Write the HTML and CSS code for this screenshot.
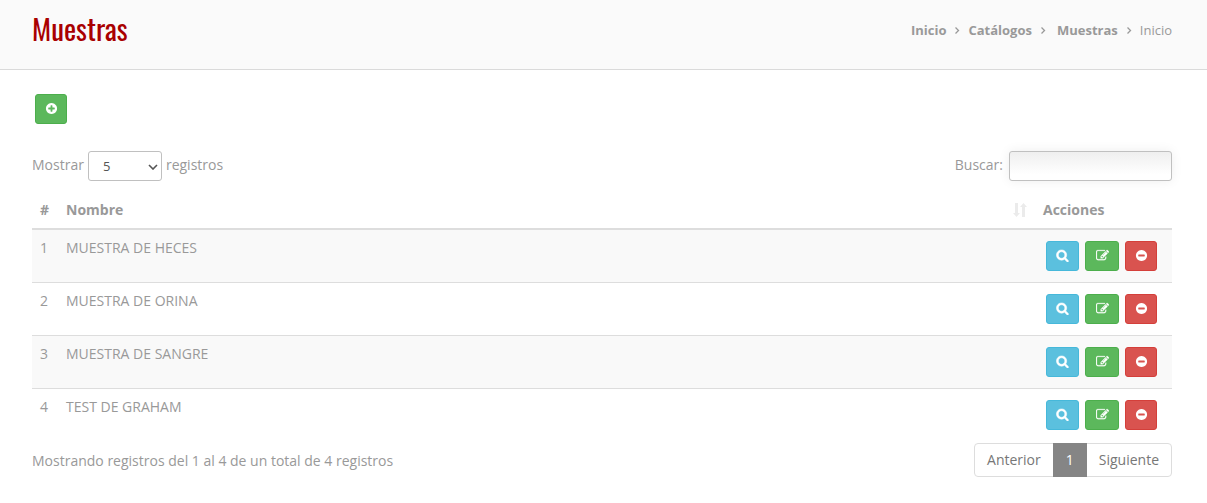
FILE: index.html
```
<!DOCTYPE html>
<html lang="es">
<head>
  <meta charset="UTF-8" />
  <meta name="viewport" content="width=device-width, initial-scale=1.0" />
  <title>Muestras</title>
  <link rel="stylesheet" href="styles.css">
</head>
<body>
  <!-- Iconos reutilizables -->
  <svg class="iconos" aria-hidden="true">
    <symbol id="i-mas" viewBox="0 0 1792 1792"><path d="M1344 960v-128q0-26-19-45t-45-19h-256v-256q0-26-19-45t-45-19h-128q-26 0-45 19t-19 45v256h-256q-26 0-45 19t-19 45v128q0 26 19 45t45 19h256v256q0 26 19 45t45 19h128q26 0 45-19t19-45v-256h256q26 0 45-19t19-45zm320-64q0 209-103 385.5t-279.5 279.5-385.5 103-385.5-103-279.5-279.5-103-385.5 103-385.5 279.5-279.5 385.5-103 385.5 103 279.5 279.5 103 385.5z"/></symbol>
    <symbol id="i-menos" viewBox="0 0 1792 1792"><path d="M1344 960v-128q0-26-19-45t-45-19h-768q-26 0-45 19t-19 45v128q0 26 19 45t45 19h768q26 0 45-19t19-45zm320-64q0 209-103 385.5t-279.5 279.5-385.5 103-385.5-103-279.5-279.5-103-385.5 103-385.5 279.5-279.5 385.5-103 385.5 103 279.5 279.5 103 385.5z"/></symbol>
    <symbol id="i-ver" viewBox="0 0 1792 1792"><path stroke="currentColor" stroke-width="70" d="M1216 832q0-185-131.5-316.5t-316.5-131.5-316.5 131.500-131.5 316.500 131.5 316.500 316.500 131.500 316.500-131.5 131.500-316.5zm512 832q0 52-38 90t-90 38q-54 0-90-38l-343-342q-179 124-399 124-143 0-273.5-55.5t-225-150-150-225-55.5-273.5 55.5-273.5 150-225 225-150 273.5-55.5 273.5 55.5 225 150 150 225 55.5 273.5q0 220-124 399l343 343q37 37 37 90z"/></symbol>
    <symbol id="i-editar" viewBox="0 0 1792 1792"><path stroke="currentColor" stroke-width="30" d="M888 1184l116-116-152-152-116 116v56h96v96h56zm440-720q-16-16-33 1l-350 350q-17 17-1 33t33-1l350-350q17-17 1-33zm80 594v190q0 119-84.5 203.5t-203.5 84.5h-832q-119 0-203.5-84.5t-84.5-203.5v-832q0-119 84.5-203.5t203.5-84.5h832q63 0 117 25 15 7 18 23 3 17-9 29l-49 49q-14 14-32 8-23-6-45-6h-832q-66 0-113 47t-47 113v832q0 66 47 113t113 47h832q66 0 113-47t47-113v-126q0-13 9-22l64-64q15-15 35-7t20 29zm-96-738l288 288-672 672h-288v-288zm444 132l-92 92-288-288 92-92q28-28 68-28t68 28l152 152q28 28 28 68t-28 68z"/></symbol>
    <symbol id="i-flecha" viewBox="0 0 6 10"><path d="M1.5 2.5l3 3-3 3" fill="none" stroke="currentColor" stroke-width="1.3"/></symbol>
    <symbol id="i-orden" viewBox="0 0 14 14"><path d="M2 0h3v10h2l-3.500 4-3.500-4h2zM9 14h3V4h2l-3.500-4L7 4h2z"/></symbol>
  </svg>

  <header class="cabecera">
    <h1>Muestras</h1>
    <nav class="migas" aria-label="Ruta">
      <a href="#">Inicio</a>
      <svg><use href="#i-flecha"/></svg>
      <a href="#">Catálogos</a>
      <svg><use href="#i-flecha"/></svg>
      <a href="#" class="seccion">Muestras</a>
      <svg><use href="#i-flecha"/></svg>
      <span>Inicio</span>
    </nav>
  </header>

  <main class="contenido">
    <div class="barra">
      <button class="boton verde" aria-label="Agregar"><svg><use href="#i-mas"/></svg></button>
    </div>

    <div class="filtros">
      <label>Mostrar
        <span class="selector">
          <select>
            <option>5</option>
            <option>10</option>
            <option>25</option>
          </select>
          <svg viewBox="0 0 10 6"><path d="M1 1l4 4 4-4" fill="none" stroke="currentColor" stroke-width="1.6"/></svg>
        </span>
        registros</label>
      <label class="buscar">Buscar: <input type="search"></label>
    </div>

    <table class="tabla">
      <thead>
        <tr>
          <th class="numero">#</th>
          <th><div class="ordenable">Nombre <svg><use href="#i-orden"/></svg></div></th>
          <th class="acciones">Acciones</th>
        </tr>
      </thead>
      <tbody>
        <tr>
          <td>1</td>
          <td>MUESTRA DE HECES</td>
          <td>
            <div class="botones">
              <button class="boton celeste" aria-label="Ver"><svg><use href="#i-ver"/></svg></button>
              <button class="boton verde editar" aria-label="Editar"><svg><use href="#i-editar"/></svg></button>
              <button class="boton rojo" aria-label="Eliminar"><svg><use href="#i-menos"/></svg></button>
            </div>
          </td>
        </tr>
        <tr>
          <td>2</td>
          <td>MUESTRA DE ORINA</td>
          <td>
            <div class="botones">
              <button class="boton celeste" aria-label="Ver"><svg><use href="#i-ver"/></svg></button>
              <button class="boton verde editar" aria-label="Editar"><svg><use href="#i-editar"/></svg></button>
              <button class="boton rojo" aria-label="Eliminar"><svg><use href="#i-menos"/></svg></button>
            </div>
          </td>
        </tr>
        <tr>
          <td>3</td>
          <td>MUESTRA DE SANGRE</td>
          <td>
            <div class="botones">
              <button class="boton celeste" aria-label="Ver"><svg><use href="#i-ver"/></svg></button>
              <button class="boton verde editar" aria-label="Editar"><svg><use href="#i-editar"/></svg></button>
              <button class="boton rojo" aria-label="Eliminar"><svg><use href="#i-menos"/></svg></button>
            </div>
          </td>
        </tr>
        <tr>
          <td>4</td>
          <td>TEST DE GRAHAM</td>
          <td>
            <div class="botones">
              <button class="boton celeste" aria-label="Ver"><svg><use href="#i-ver"/></svg></button>
              <button class="boton verde editar" aria-label="Editar"><svg><use href="#i-editar"/></svg></button>
              <button class="boton rojo" aria-label="Eliminar"><svg><use href="#i-menos"/></svg></button>
            </div>
          </td>
        </tr>
      </tbody>
    </table>

    <div class="pie">
      <p>Mostrando registros del 1 al 4 de un total de 4 registros</p>
      <nav class="paginas" aria-label="Paginación">
        <a href="#">Anterior</a>
        <a href="#" class="activa">1</a>
        <a href="#">Siguiente</a>
      </nav>
    </div>
  </main>
</body>
</html>
```
FILE: styles.css
```
* {
  box-sizing: border-box;
}
body {
  font-family: 'Open Sans', sans-serif;
  font-size: 14px;
  line-height: 20px;
  margin: 0;
  background-color: #fff;
  color: #999;
}
svg {
  fill: currentColor;
}
.iconos {
  display: none;
}
.cabecera {
  display: flex;
  justify-content: space-between;
  align-items: flex-start;
  padding: 8px 35px 21px 32px;
  background-color: #fafafa;
  border-bottom: 1px solid #dadada;
}
.cabecera h1 {
  font-family: 'Oswald', 'Open Sans Condensed', 'Roboto Condensed', 'Liberation Sans Narrow', sans-serif;
  font-size: 29px;
  font-weight: 400;
  line-height: 40px;
  margin: 0;
  color: #a90000;
}
.migas {
  display: flex;
  align-items: center;
  gap: 8px;
  padding-top: 12px;
  font-size: 13px;
}
.migas a {
  color: #999;
  font-weight: bold;
  text-decoration: none;
}
.migas .seccion {
  margin-left: 3px;
}
.migas svg {
  width: 6px;
  height: 10px;
}
.contenido {
  padding: 24px 35px 24px 32px;
}
.barra {
  display: flex;
  padding-left: 3px;
  margin-bottom: 27px;
}
.boton {
  display: flex;
  align-items: center;
  justify-content: center;
  width: 32px;
  height: 30px;
  padding: 0 0 1px;
  border: 1px solid;
  border-radius: 3px;
  color: #fff;
  cursor: pointer;
}
.boton svg {
  width: 13px;
  height: 13px;
}
.verde {
  background-color: #5cb85c;
  border-color: #4cae4c;
}
.celeste {
  width: 33px;
  background-color: #5bc0de;
  border-color: #46b8da;
}
.rojo {
  background-color: #d9534f;
  border-color: #d43f3a;
}
.editar {
  width: 34px;
}
.filtros {
  display: flex;
  justify-content: space-between;
  margin-bottom: 10px;
}
.filtros label {
  display: flex;
  align-items: flex-start;
  gap: 4px;
  line-height: 28px;
}
.filtros .buscar {
  gap: 6px;
}
.selector {
  position: relative;
  display: flex;
}
.selector select {
  appearance: none;
  width: 74px;
  height: 30px;
  padding: 0 14px;
  border: 1px solid #c0c0c0;
  border-radius: 3px;
  background-color: #fff;
  color: #555;
  font-family: inherit;
  font-size: 13px;
}
.selector svg {
  position: absolute;
  right: 4px;
  top: 13px;
  width: 10px;
  height: 6px;
  color: #555;
  pointer-events: none;
}
.buscar input {
  width: 163px;
  height: 30px;
  padding: 4px 10px;
  border: 1px solid #c0c0c0;
  border-radius: 3px;
  background-image: linear-gradient(#efefef, #fff 80%);
  box-shadow: 0 0 12px #eee;
  color: #555;
  font-family: inherit;
  font-size: 13px;
}
.tabla {
  width: 100%;
  border-collapse: separate;
  border-spacing: 0;
}
.tabla th {
  padding: 9px 8px 8px;
  border-bottom: 2px solid #ddd;
  text-align: left;
}
.tabla .numero {
  width: 26px;
}
.tabla .acciones {
  width: 137px;
}
.ordenable {
  display: flex;
  align-items: center;
  justify-content: space-between;
}
.ordenable svg {
  width: 14px;
  height: 14px;
  color: #ebebeb;
}
.tabla td {
  padding: 8px;
  border-bottom: 1px solid #ddd;
  vertical-align: top;
}
.tabla tr:last-child td {
  border-bottom: none;
}
.tabla tbody tr:nth-child(odd) {
  background-color: #f9f9f9;
}
.botones {
  display: flex;
  gap: 6px;
  padding: 3px;
}
.pie {
  display: flex;
  align-items: flex-start;
  justify-content: space-between;
  margin-top: 2px;
}
.pie p {
  margin: 8px 0 0;
}
.paginas {
  display: flex;
  border: 1px solid #ddd;
  border-radius: 4px;
}
.paginas a {
  padding: 6px 12px;
  color: #777;
  text-decoration: none;
}
.paginas .activa {
  margin: -1px 0;
  padding: 7px 13px;
  background-color: #858585;
  color: #fff;
}
```
